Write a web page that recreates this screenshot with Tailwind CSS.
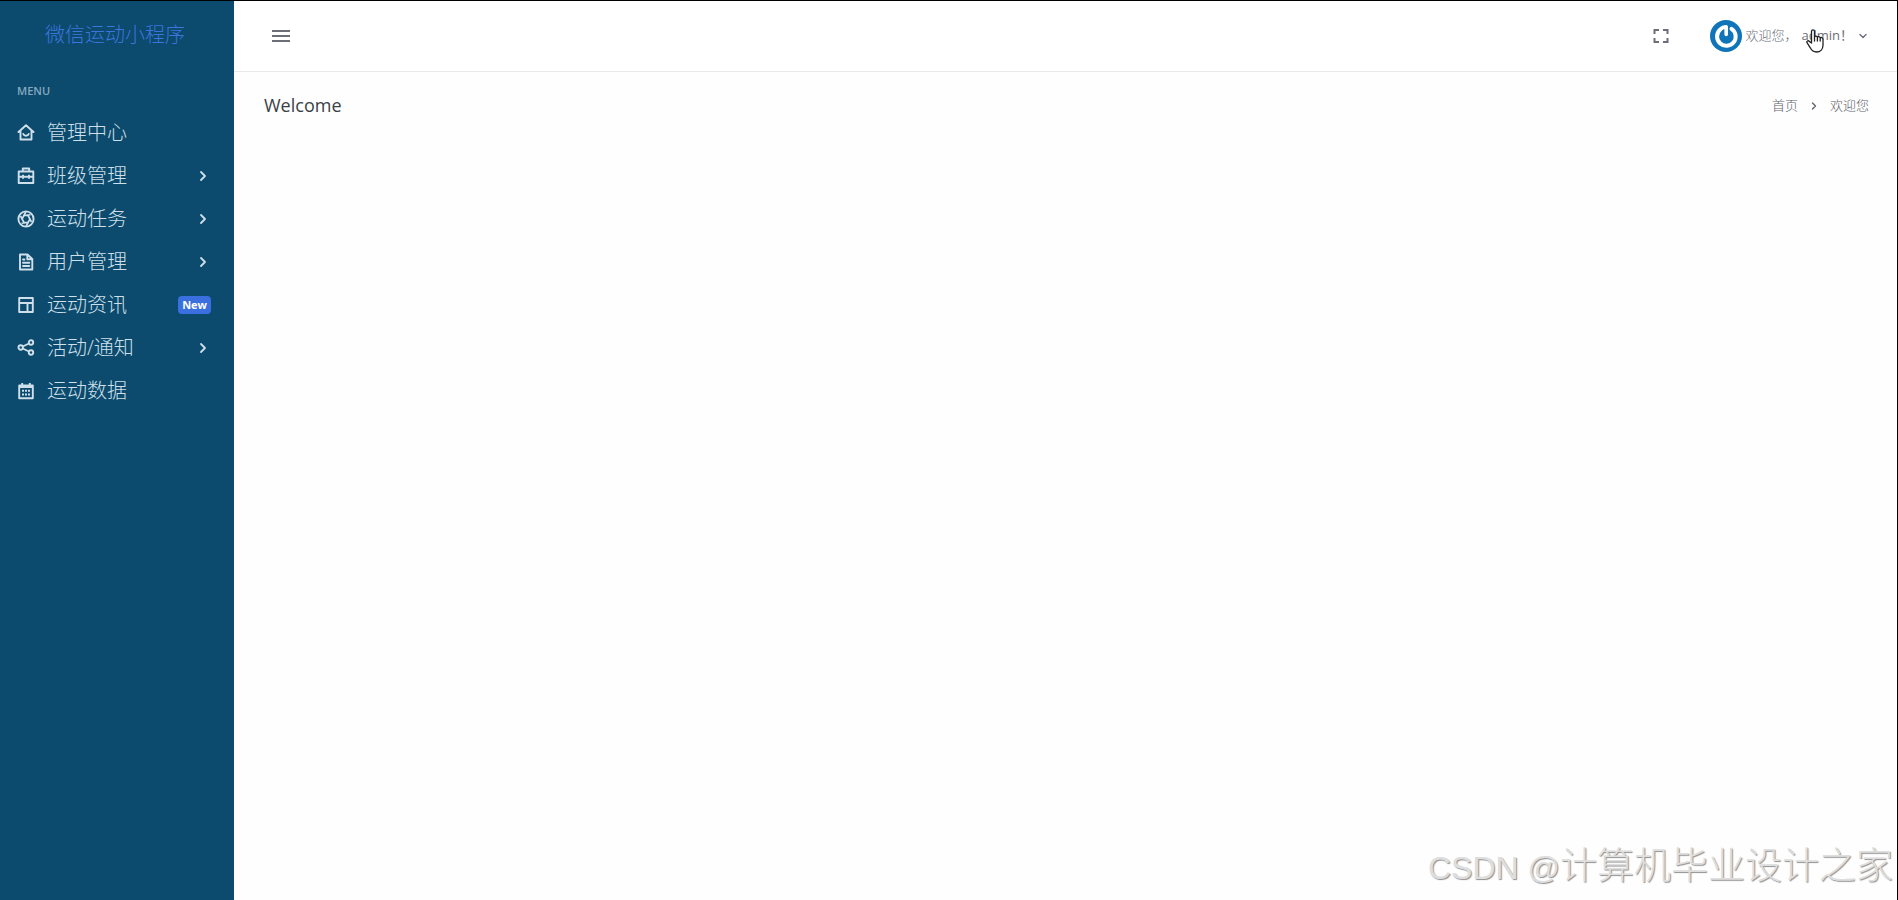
<!DOCTYPE html>
<html lang="zh-CN">
<head>
  <meta charset="UTF-8" />
  <meta name="viewport" content="width=device-width, initial-scale=1.0"/>
  <title>微信运动小程序</title>
  <script src="https://cdn.jsdelivr.net/npm/@tailwindcss/browser@4"></script>
</head>
<body class="min-h-screen flex bg-[#fefefe] border-t border-r border-black font-['Open_Sans','Noto_Sans_CJK_SC',sans-serif]">

  <!-- Sidebar -->
  <aside class="w-[234px] shrink-0 bg-[#0c4a6e] text-[#cfe0ea]">
    <a href="#" class="flex h-[68px] items-center justify-center pr-1 text-xl font-light text-[#3b76dc]">微信运动小程序</a>

    <p class="mt-3 px-[17px] text-[11px] leading-5 font-semibold text-[#86a9bf]">MENU</p>

    <nav class="mt-[10px]">
      <ul class="text-xl font-light">
        <li>
          <a href="#" class="flex h-[43px] items-center gap-3 pl-[17px] pr-[23px]">
            <svg class="size-[18px]" viewBox="0 0 18 18" fill="none" stroke="currentColor" stroke-width="1.9" stroke-linejoin="round" stroke-linecap="round"><path d="M1.500 8 9 1.200 16.500 8M3.500 6.800v8.700h11V6.800M6.300 10c.8 2.400 4.600 2.400 5.400 0"/></svg>
            <span>管理中心</span>
          </a>
        </li>
        <li>
          <a href="#" class="flex h-[43px] items-center gap-3 pl-[17px] pr-[23px]">
            <svg class="size-[18px]" viewBox="0 0 18 18" fill="none" stroke="currentColor" stroke-width="1.900" stroke-linejoin="round"><path d="M1.700 4.500h14.600v11.500H1.700zM5.800 4.500V1.500h6.400v3M1.700 9.800h14.600M6 7.800v4M12 7.800v4"/></svg>
            <span>班级管理</span>
            <svg class="ml-auto size-4" viewBox="0 0 16 16" fill="none" stroke="currentColor" stroke-width="1.800" stroke-linecap="round" stroke-linejoin="round"><path d="m6 4 4 4-4 4"/></svg>
          </a>
        </li>
        <li>
          <a href="#" class="flex h-[43px] items-center gap-3 pl-[17px] pr-[23px]">
            <svg class="size-[18px]" viewBox="0 0 18 18" fill="none" stroke="currentColor" stroke-width="1.600" stroke-linejoin="round"><circle cx="9" cy="9" r="7.600" stroke-width="1.900"/><path d="M7 5.500h4L13 9l-2 3.500H7L5 9zM7 5.500l6.500-.8M11 5.500l3.500 6.500M13 9l-4 7.500M11 12.500l-6.500.8M7 12.500 3.500 6M5 9l4-7.500"/></svg>
            <span>运动任务</span>
            <svg class="ml-auto size-4" viewBox="0 0 16 16" fill="none" stroke="currentColor" stroke-width="1.800" stroke-linecap="round" stroke-linejoin="round"><path d="m6 4 4 4-4 4"/></svg>
          </a>
        </li>
        <li>
          <a href="#" class="flex h-[43px] items-center gap-3 pl-[17px] pr-[23px]">
            <svg class="size-[18px]" viewBox="0 0 18 18" fill="none" stroke="currentColor" stroke-width="1.900" stroke-linejoin="round" stroke-linecap="round"><path d="M3 1.500h7.500L15.300 6v10.500H3zM10.300 1.800V6.200H15M6 6.500h1.500M6 9.700h6.300M6 13h6.300"/></svg>
            <span>用户管理</span>
            <svg class="ml-auto size-4" viewBox="0 0 16 16" fill="none" stroke="currentColor" stroke-width="1.800" stroke-linecap="round" stroke-linejoin="round"><path d="m6 4 4 4-4 4"/></svg>
          </a>
        </li>
        <li>
          <a href="#" class="flex h-[43px] items-center gap-3 pl-[17px] pr-[23px]">
            <svg class="size-[18px]" viewBox="0 0 18 18" fill="none" stroke="currentColor" stroke-width="1.900" stroke-linejoin="round"><path d="M2.200 2h13.600v14H2.200zM2.200 7h13.600M10.500 7v9"/></svg>
            <span>运动资讯</span>
            <span class="ml-auto rounded bg-[#3a6fe0] px-1 text-[11px] leading-[18px] font-bold text-white">New</span>
          </a>
        </li>
        <li>
          <a href="#" class="flex h-[43px] items-center gap-3 pl-[17px] pr-[23px]">
            <svg class="size-[18px]" viewBox="0 0 18 18" fill="none" stroke="currentColor" stroke-width="1.900"><circle cx="3.700" cy="8.500" r="2.200"/><circle cx="14" cy="3.500" r="2.200"/><circle cx="14" cy="13.500" r="2.200"/><path d="m5.700 7.500 6.300-3M5.700 9.500l6.300 3"/></svg>
            <span>活动/通知</span>
            <svg class="ml-auto size-4" viewBox="0 0 16 16" fill="none" stroke="currentColor" stroke-width="1.800" stroke-linecap="round" stroke-linejoin="round"><path d="m6 4 4 4-4 4"/></svg>
          </a>
        </li>
        <li>
          <a href="#" class="flex h-[43px] items-center gap-3 pl-[17px] pr-[23px]">
            <svg class="size-[18px]" viewBox="0 0 18 18" fill="none" stroke="currentColor" stroke-width="1.900" stroke-linejoin="round"><path d="M2.200 3.500h13.600v12.800H2.200zM2.200 5h13.600M5.200 1v3M12.800 1v3"/><path d="M5 8.700h2m1 0h2m1 0h2M5 12.500h2m1 0h2m1 0h2" stroke-width="2"/></svg>
            <span>运动数据</span>
          </a>
        </li>
      </ul>
    </nav>
  </aside>

  <div class="flex min-w-0 flex-1 flex-col">
    <!-- Top bar -->
    <header class="flex h-[71px] items-center border-b border-[#e9e9ec] bg-white pl-9 pr-7 text-[#6c6f78]">
      <button type="button" aria-label="Menu">
        <svg class="size-[22px]" viewBox="0 0 22 22" stroke="currentColor" stroke-width="2"><path d="M2 6h18M2 11h18M2 16h18"/></svg>
      </button>

      <button type="button" aria-label="Fullscreen" class="ml-auto">
        <svg class="size-[18px]" viewBox="0 0 18 18" fill="none" stroke="currentColor" stroke-width="2"><path d="M2.500 7V3H7M11 3h4.500v4M15.500 11v4H11M7 15H2.500v-4"/></svg>
      </button>

      <button type="button" class="relative ml-10 flex items-center text-[13px]">
        <svg class="mr-1 size-8" viewBox="0 0 32 32" fill="none"><circle cx="16" cy="16" r="16" fill="#0f75b8"/><path d="M10.200 9.600A9.300 9.300 0 1 0 21.500 8.800" stroke="#fff" stroke-width="4" stroke-linecap="round"/><path d="M10.200 9.600Q12.700 6.900 16.200 6.900V14.500" stroke="#fff" stroke-width="3.600" stroke-linecap="round" stroke-linejoin="round"/></svg>
        <span class="font-light">欢迎您，</span><span class="ml-1">admin！</span>
        <svg class="ml-1 size-3" viewBox="0 0 12 12" fill="none" stroke="currentColor" stroke-width="1.400" stroke-linecap="round" stroke-linejoin="round"><path d="m3 4.500 3 3 3-3"/></svg>
        <!-- Hand pointer -->
        <svg class="absolute left-24 top-[9px] h-6 w-[18px]" viewBox="0 0 18 24" fill="#fff" stroke="#222" stroke-width="1.300" stroke-linejoin="round" stroke-linecap="round"><path d="M5.500 14V2.500c0-2.200 3-2.200 3 0V8c.3-1.300 2.700-1.200 2.900.3.500-1.100 2.600-.9 2.800.7.600-.9 2.800-.5 2.800 1.500V16c0 4-2.500 7-6.500 7-3.300 0-5-1.800-6.200-4.200L1 13.700c-.8-1.600 1.200-2.600 2.300-1.300zM8.500 8v4M11.400 8.500V12M14.200 9.500V12"/></svg>
      </button>
    </header>

    <!-- Page title -->
    <main class="relative flex flex-1 flex-col pl-[30px] pr-7">
      <div class="flex h-[68px] items-center justify-between">
        <h1 class="text-lg leading-6 pb-[2px] text-[#3b4046]">Welcome</h1>
        <nav aria-label="Breadcrumb" class="flex items-center text-[13px] font-light text-[#5f636b]">
          <a href="#">首页</a>
          <svg class="mx-[10px] size-3" viewBox="0 0 12 12" fill="none" stroke="currentColor" stroke-width="1.400" stroke-linecap="round" stroke-linejoin="round"><path d="m4.500 3 3 3-3 3"/></svg>
          <span>欢迎您</span>
        </nav>
      </div>
      <p class="absolute bottom-3 right-1 text-[37px] leading-10 font-light whitespace-nowrap text-[#dedede] [text-shadow:1px_1px_1px_#8f8f8f] font-['Liberation_Sans','Noto_Sans_CJK_SC',sans-serif]"><span class="text-[32px]">CSDN @</span>计算机毕业设计之家</p>
    </main>
  </div>
</body>
</html>
